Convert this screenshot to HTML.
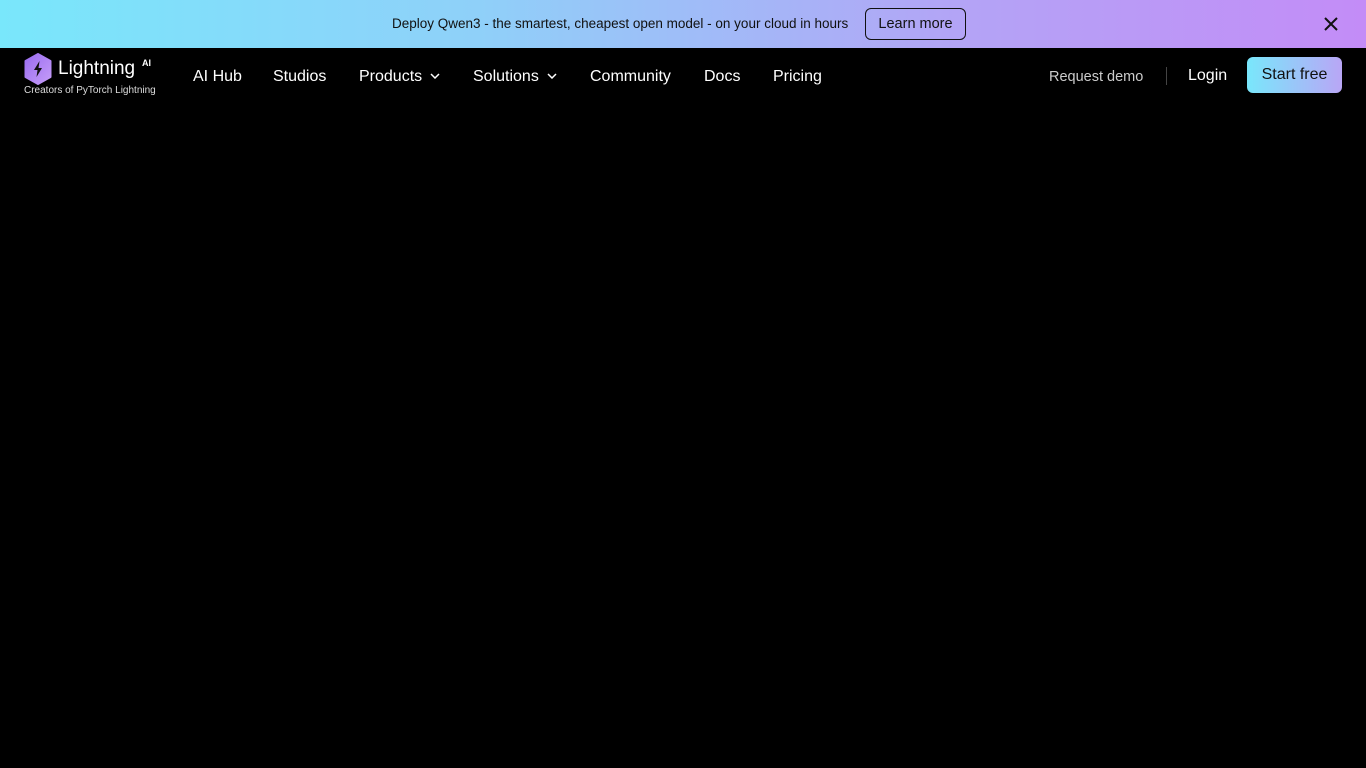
<!DOCTYPE html>
<html><head><meta charset="utf-8"><style>
*{margin:0;padding:0;box-sizing:border-box}
body{width:1366px;height:768px;background:#000;font-family:"Liberation Sans",sans-serif;overflow:hidden;position:relative}
.banner{position:absolute;left:0;top:0;width:1366px;height:48px;background:linear-gradient(90deg,#79e7fb 0%,#8fd0f9 35%,#b3a4f6 70%,#c38cf7 100%)}
.banner .msg{position:absolute;left:392px;top:16px;font-size:13.5px;color:#111;white-space:nowrap}
.banner .btn{position:absolute;left:865px;top:8px;width:101px;height:32px;border:1px solid #111;border-radius:6px;font-size:14.5px;color:#111;text-align:center;line-height:30px}
.close{position:absolute;left:1323px;top:16px}
.logo{position:absolute;left:24px;top:53px}
.nav a{position:absolute;top:68px;color:#fff;font-size:16px;text-decoration:none;white-space:nowrap}
.chev{display:inline-block;margin-left:8px;vertical-align:2px}
.rd{position:absolute;left:1049px;top:69px;color:#ccc;font-size:14.5px}
.sep{position:absolute;left:1166px;top:67px;width:1px;height:18px;background:#444}
.login{position:absolute;left:1188px;top:67px;color:#fff;font-size:16px}
.start{position:absolute;left:1247px;top:57px;width:95px;height:36px;border-radius:6px;background:linear-gradient(90deg,#79e7fb,#b9a6f6);color:#111;font-size:16px;text-align:center;line-height:36px}
</style></head><body>
<div class="banner">
<div class="msg">Deploy Qwen3 - the smartest, cheapest open model - on your cloud in hours</div>
<div class="btn">Learn more</div>
<svg class="close" width="16" height="16" viewBox="0 0 16 16"><path d="M2 2L14 14M14 2L2 14" stroke="#111" stroke-width="2"/></svg>
</div>
<div class="logo">
<svg width="28" height="32" viewBox="0 0 28 32" style="position:absolute;left:0;top:0"><defs><linearGradient id="g" x1="0" y1="0" x2="1" y2="1"><stop offset="0" stop-color="#9a6cf0"/><stop offset="1" stop-color="#c59cf8"/></linearGradient></defs><path d="M14 1L26.5 8V24L14 31L1.5 24V8Z" fill="url(#g)" stroke="url(#g)" stroke-width="2" stroke-linejoin="round"/><path d="M15.5 8L10 17H13.5L12.5 24L18 15H14.5Z" fill="#111"/></svg>
<div style="position:absolute;left:34px;top:5px;color:#fff;font-size:19px;white-space:nowrap">Lightning</div>
<div style="position:absolute;left:118px;top:5px;color:#fff;font-size:9px;font-weight:bold">AI</div>
<div style="position:absolute;left:0;top:32px;color:#ddd;font-size:10px;white-space:nowrap">Creators of PyTorch Lightning</div>
</div>
<div class="nav">
<a style="left:193px">AI Hub</a>
<a style="left:273px">Studios</a>
<a style="left:359px">Products<svg class="chev" width="10" height="6" viewBox="0 0 10 6"><path d="M1 1L5 5L9 1" stroke="#fff" stroke-width="1.5" fill="none"/></svg></a>
<a style="left:473px">Solutions<svg class="chev" width="10" height="6" viewBox="0 0 10 6"><path d="M1 1L5 5L9 1" stroke="#fff" stroke-width="1.5" fill="none"/></svg></a>
<a style="left:590px">Community</a>
<a style="left:704px">Docs</a>
<a style="left:773px">Pricing</a>
</div>
<div class="rd">Request demo</div>
<div class="sep"></div>
<div class="login">Login</div>
<div class="start">Start free</div>
</body></html>
